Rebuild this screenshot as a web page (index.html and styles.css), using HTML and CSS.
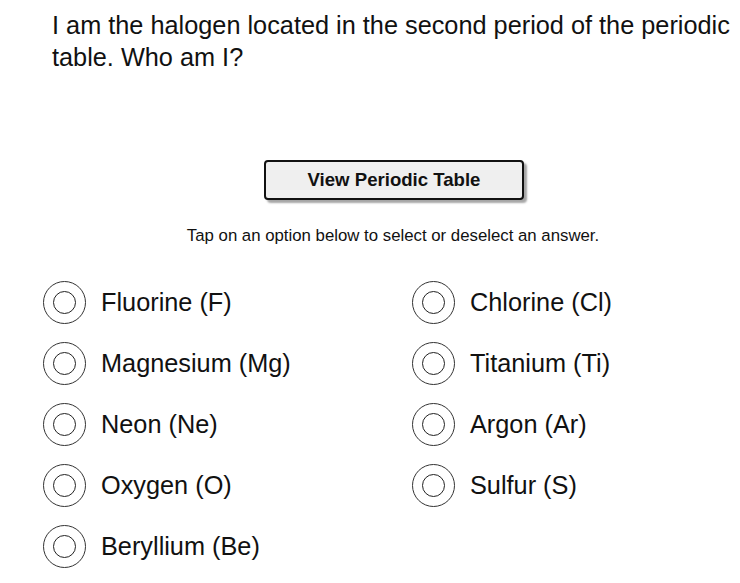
FILE: index.html
```html
<!DOCTYPE html>
<html>
<head>
<meta charset="utf-8">
<link rel="stylesheet" href="styles.css">
</head>
<body>
<div class="page">
  <p class="question">I am the halogen located in the second period of the periodic table. Who am I?</p>
  <div class="actions">
    <button class="pt-button">View Periodic Table</button>
  </div>
  <p class="hint">Tap on an option below to select or deselect an answer.</p>
  <div class="options">
    <div class="option"><span class="radio"><span class="radio-inner"></span></span><span class="label">Fluorine (F)</span></div>
    <div class="option"><span class="radio"><span class="radio-inner"></span></span><span class="label">Chlorine (Cl)</span></div>
    <div class="option"><span class="radio"><span class="radio-inner"></span></span><span class="label">Magnesium (Mg)</span></div>
    <div class="option"><span class="radio"><span class="radio-inner"></span></span><span class="label">Titanium (Ti)</span></div>
    <div class="option"><span class="radio"><span class="radio-inner"></span></span><span class="label">Neon (Ne)</span></div>
    <div class="option"><span class="radio"><span class="radio-inner"></span></span><span class="label">Argon (Ar)</span></div>
    <div class="option"><span class="radio"><span class="radio-inner"></span></span><span class="label">Oxygen (O)</span></div>
    <div class="option"><span class="radio"><span class="radio-inner"></span></span><span class="label">Sulfur (S)</span></div>
    <div class="option"><span class="radio"><span class="radio-inner"></span></span><span class="label">Beryllium (Be)</span></div>
  </div>
</div>
</body>
</html>
```
FILE: styles.css
```css
html, body {
  margin: 0;
  padding: 0;
  background: #ffffff;
}
body {
  font-family: "Liberation Sans", Arial, Helvetica, sans-serif;
  color: #111111;
  overflow: hidden;
}
.page {
  width: 740px;
  height: 583px;
  overflow: hidden;
}
.question {
  margin: 0;
  padding: 9px 0 0 52px;
  font-size: 25.3px;
  line-height: 32px;
  color: #111111;
}
.actions {
  display: flex;
  justify-content: flex-start;
  padding-left: 264px;
  margin-top: 87px;
}
.pt-button {
  width: 260px;
  height: 40px;
  box-sizing: border-box;
  background: #efefef;
  border: 2px solid #111111;
  border-radius: 4px;
  box-shadow: 3px 3px 2px rgba(0, 0, 0, 0.35);
  font-family: "Liberation Sans", Arial, Helvetica, sans-serif;
  font-weight: bold;
  font-size: 18.6px;
  color: #111111;
  padding: 0;
}
.hint {
  margin: 25px 0 0 0;
  padding-left: 52px;
  padding-right: 6px;
  text-align: center;
  font-size: 16.8px;
  line-height: 22px;
  color: #111111;
}
.options {
  display: grid;
  grid-template-columns: 369px 328px;
  grid-auto-rows: 61px;
  margin-left: 43px;
  margin-top: 25px;
}
.option {
  display: flex;
  align-items: center;
  gap: 15px;
}
.radio {
  width: 43px;
  height: 43px;
  box-sizing: border-box;
  border: 1px solid #333333;
  border-radius: 50%;
  display: flex;
  align-items: center;
  justify-content: center;
  flex: none;
}
.radio-inner {
  width: 23px;
  height: 23px;
  box-sizing: border-box;
  border: 1.5px solid #222222;
  border-radius: 50%;
}
.label {
  font-size: 25.3px;
  color: #111111;
  white-space: nowrap;
}
```
